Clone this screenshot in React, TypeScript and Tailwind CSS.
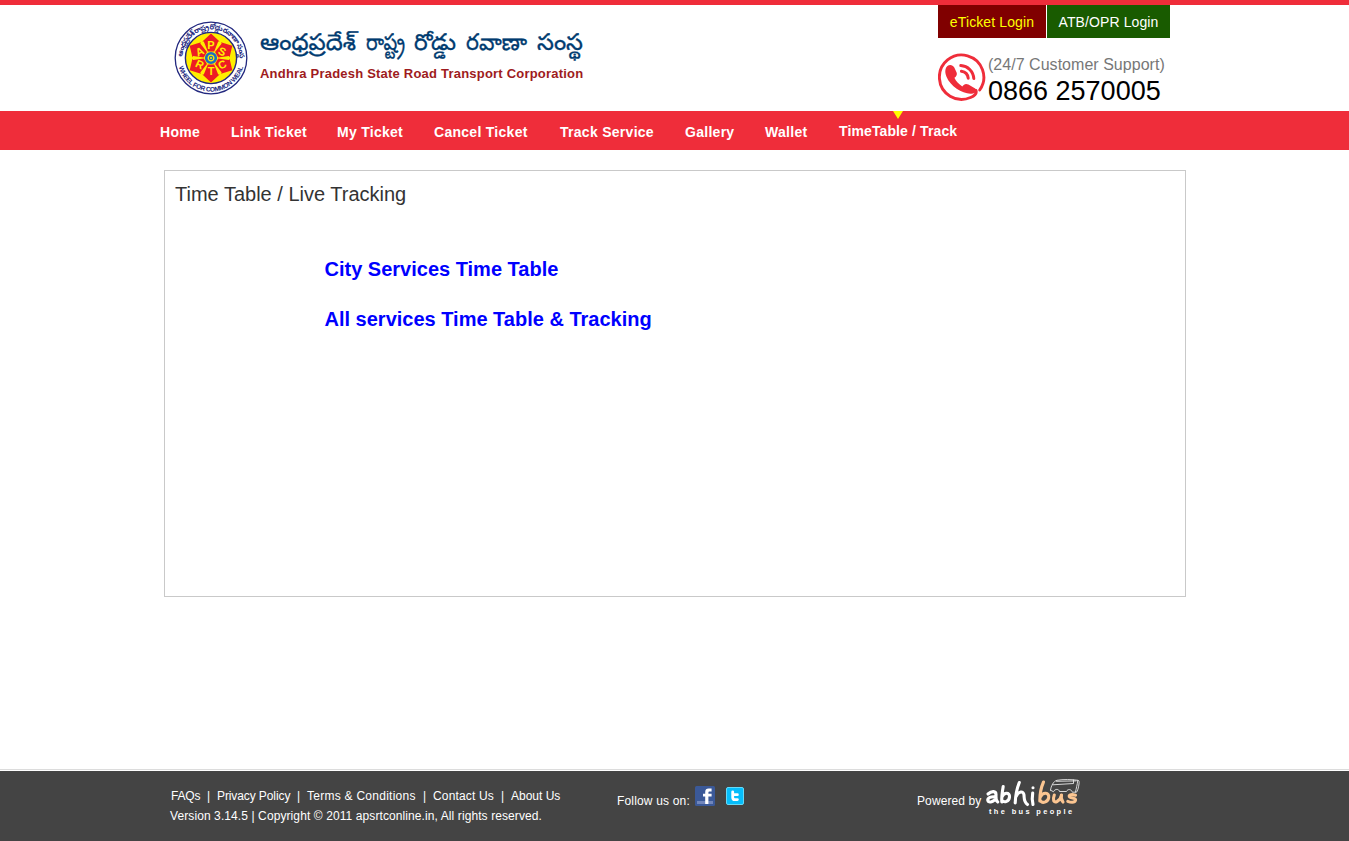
const navItems = [
  { label: "Home", width: "w-[71px]" },
  { label: "Link Ticket", width: "w-[106px]" },
  { label: "My Ticket", width: "w-[97px]" },
  { label: "Cancel Ticket", width: "w-[126px]" },
  { label: "Track Service", width: "w-[125px]" },
  { label: "Gallery", width: "w-[80px]" },
  { label: "Wallet", width: "w-[74px]" },
];

const footerLinks = [
  { label: "FAQs", style: "w-[46px] tracking-[-0.2px]" },
  { label: "Privacy Policy", style: "w-[90px] tracking-[-0.1px]" },
  { label: "Terms & Conditions", style: "w-[126px] tracking-[0.26px]" },
  { label: "Contact Us", style: "w-[78px] tracking-[0.15px]" },
  { label: "About Us", style: "" },
];

const sectors = [
  { letter: "P", angle: 0, tilt: 0 },
  { letter: "S", angle: 60, tilt: 25 },
  { letter: "C", angle: 120, tilt: -25 },
  { letter: "T", angle: 180, tilt: 0 },
  { letter: "R", angle: 240, tilt: 25 },
  { letter: "A", angle: 300, tilt: -25 },
];

const teluguWords = [
  { word: "ఆంధ్రప్రదేశ్", x: 0, width: 96 },
  { word: "రాష్ట్ర", x: 106, width: 39 },
  { word: "రోడ్డు", x: 154, width: 42 },
  { word: "రవాణా", x: 206, width: 61 },
  { word: "సంస్థ", x: 277, width: 46 },
];

function Emblem() {
  return (
    <svg className="h-[74px] w-[74px] shrink-0" viewBox="-37 -37 74 74">
      <circle r="35.8" fill="#fff" stroke="#22287f" strokeWidth="1.3" />
      <circle r="25.6" fill="#ffee00" stroke="#22287f" strokeWidth="1.4" />
      <defs>
        <path id="arc-top" d="M-27.6 7A28.5 28.5 0 1 1 27.6 7" />
        <path id="arc-bottom" d="M-33.1 3A33.2 33.2 0 0 0 33.1 3" />
      </defs>
      {sectors.map(({ letter, angle, tilt }) => (
        <g key={letter} transform={`rotate(${angle})`}>
          <path d="M-3.2 -6.5L-7.2 -16.5L-8.6 -16.5L0 -24.6L8.6 -16.5L7.2 -16.5L3.2 -6.5Z" fill="#ed1c24" />
          <g transform={`translate(0 -13) rotate(${tilt - angle})`}>
            <text y="3.9" textAnchor="middle" fontSize="11" fontWeight="700" fill="#ffee00" fontFamily="Liberation Sans, sans-serif">
              {letter}
            </text>
          </g>
        </g>
      ))}
      <circle r="4.8" fill="#ffee00" stroke="#1c6fc0" strokeWidth="2.6" />
      <circle r="2.2" fill="#1c6fc0" />
      <circle r="1" fill="#ffee00" />
      <text fontSize="7.2" fontWeight="700" fill="#22287f" fontFamily="Noto Sans Telugu, Noto Sans, sans-serif">
        <textPath href="#arc-top" startOffset="7" textLength="89">ఆంధ్రప్రదేశ్ రాష్ట్ర రోడ్డు రవాణా సంస్థ</textPath>
      </text>
      <text fontSize="6.6" fontWeight="700" fill="#22287f" fontFamily="Liberation Sans, sans-serif">
        <textPath href="#arc-bottom" startOffset="6" textLength="87">WHEEL FOR COMMON WEAL</textPath>
      </text>
    </svg>
  );
}

function PhoneIcon() {
  return (
    <svg className="h-[48px] w-[48px] shrink-0" viewBox="0 0 48 48" fill="none" stroke="#ef2d3a" strokeLinecap="round">
      <path d="M41.7 37A22.2 22.2 0 1 0 32.5 44.5C36 43 39 40.5 38 37.5" strokeWidth="2.9" />
      <path d="M7.6 16C8.8 11 14.4 10.6 16.3 14.6L18.6 19.5C19.5 22.2 17.8 23.8 16.4 24.8C17.8 28 20.8 31.2 24.3 33.4C26 31 27.9 30.2 30.4 31.6L37.2 35.4C40.2 37.8 38 40.2 33.5 40.7C25 41.4 12.4 33.6 8.5 23.8C7.4 21 6.9 18.6 7.6 16Z" fill="#ef2d3a" stroke="none" />
      <path d="M23.4 18.3C27 18.8 29.8 21.5 30.2 25.2M22.8 12.5C29.8 13 35.3 18.2 35.8 25.5" strokeWidth="3" />
    </svg>
  );
}

function FacebookIcon() {
  return (
    <svg className="h-5 w-5" viewBox="0 0 20 20">
      <rect width="20" height="20" rx="1.5" fill="#3b5998" />
      <rect x="2" y="15" width="16" height="3" fill="#7186bb" />
      <path d="M10.2 18V10.5H8V7.7H10.2V6C10.2 3.7 11.5 2.6 13.7 2.6H16.6V5.4H14.7C13.7 5.4 13.4 5.8 13.4 6.6V7.7H16.6V10.5H13.4V18Z" fill="#fff" />
    </svg>
  );
}

function TwitterIcon() {
  return (
    <svg className="h-[18px] w-[18px]" viewBox="0 0 18 18">
      <rect x=".5" y=".5" width="17" height="17" rx="1.5" fill="#06bdfb" stroke="#65daf8" />
      <path d="M6.7 4.8V10.4Q6.7 12.6 8.9 12.6H11.4M6.8 7.7H11.4" fill="none" stroke="#fff" strokeWidth="2.8" strokeLinecap="round" />
    </svg>
  );
}

function AbhibusLogo() {
  return (
    <svg className="h-[38px] w-[96px]" viewBox="0 0 96 38" fill="none" strokeLinecap="round" strokeLinejoin="round">
      <g stroke="#fff" strokeWidth="3.1">
        <path d="M3 15C7 11.5 11 12 11 15.5C11 20 10.5 21.5 12.8 23M10.8 18C6 17 2.4 19 2.8 21.5C3.4 24.5 9.5 22.5 10.7 19" />
        <path d="M18.2 7.5C17.2 13 16.5 18 16.8 23M17 18C19 13 25 13 24.5 18C24 22.5 19.5 24 17 21.5" />
        <path d="M34.3 3.5C31.7 10 30.5 16 30.2 24M31 17.5C33.5 12 38.5 11.5 39 16C39.3 20 38.8 23 42.5 25.5" />
        <path d="M47.7 14C47 18 47 21.5 48 25.5M48 8.7V8.8" />
      </g>
      <g stroke="#fbc591" strokeWidth="3.1">
        <path d="M58.5 3C55.8 9 54.8 15 54.8 22M55.3 18C58 12.5 64.4 13.5 63.7 18.5C63 23.5 57 25 54.8 21" />
        <path d="M69.3 16C67.5 21 68.5 24 72 22.5C74.5 21.3 76 18.5 76.5 16C75.8 19 76.2 21 78 23" />
        <path d="M90.5 16.2C86 14.7 82.5 16.2 85 18.2C87 19.4 91 19 90.5 21.2C89.7 24.3 85 23.3 82.8 22.3" />
      </g>
      <g stroke="#e8e8e8" strokeWidth=".9">
        <path d="M65.5 11.2C66 7 68.5 2 72 1.3C78 .2 87 .4 93 1.3C94.2 1.5 94.3 3 94 5C93.5 9 92.5 12 91.5 13.2H88M65.5 11.2L68.5 12.7C70 9.5 74 9.8 74.5 12.5H81.5C82.5 9.8 86.5 9.8 87.3 13M67.8 5.8L88.5 4.5V1M92.8 1.5C92.3 6 91 10 90.5 13M71.5 2.3L91 1.9" />
      </g>
      <text x="4" y="35" textLength="83" fontSize="7.4" fontWeight="700" fill="#fff" fontFamily="Liberation Sans, sans-serif">the bus people</text>
    </svg>
  );
}

export default function App() {
  return (
    <div className="flex h-[841px] w-full flex-col overflow-hidden bg-white font-['Liberation_Sans',Arial,sans-serif]">
      <header className="h-[111px] shrink-0 border-t-[5px] border-[#ef2d3a]">
        <div className="flex justify-between pr-[179px] pl-[174px]">
          <div className="flex pt-4">
            <Emblem />
            <div className="pl-3">
              <svg className="h-[45px] w-[324px] overflow-visible" viewBox="0 0 324 45">
                {teluguWords.map(({ word, x, width }) => (
                  <text key={word} x={x} y="28.5" textLength={width} lengthAdjust="spacingAndGlyphs" fontSize="22.5" fill="#003b70" stroke="#003b70" strokeWidth=".35" fontFamily="Noto Sans Telugu, Noto Sans, sans-serif">
                    {word}
                  </text>
                ))}
              </svg>
              <p className="text-[13px] leading-[15px] font-bold tracking-[0.21px] whitespace-nowrap text-[#9e1b20]">Andhra Pradesh State Road Transport Corporation</p>
            </div>
          </div>
          <div className="w-[232px]">
            <div className="flex h-[33px] gap-px text-[14px] leading-[34px] whitespace-nowrap">
              <a className="w-[108px] bg-[#800000] text-center tracking-[0.12px] text-[#ffff00]">eTicket Login</a>
              <a className="w-[123px] bg-[#195b00] text-center tracking-[0.1px] text-white">ATB/OPR Login</a>
            </div>
            <div className="flex gap-[2px] pt-[15px] whitespace-nowrap">
              <PhoneIcon />
              <div className="pt-[3px]">
                <p className="text-[16px] leading-[18px] tracking-[0.03px] text-[#777]">(24/7 Customer Support)</p>
                <p className="text-[27px] leading-[34px] text-black">0866 2570005</p>
              </div>
            </div>
          </div>
        </div>
      </header>
      <nav className="flex h-[39px] shrink-0 bg-[#ef2d3a] pl-[160px] text-[14px] leading-[42px] font-bold whitespace-nowrap text-white">
        {navItems.map(({ label, width }) => (
          <a key={label} className={`${width} shrink-0 tracking-[0.28px]`}>{label}</a>
        ))}
        <a className="relative text-[14px] leading-[40px] tracking-[0.12px]">
          TimeTable / Track
          <svg className="absolute top-0 left-[54px] h-2 w-[10px]" viewBox="0 0 10 8"><path d="M0 0H10L5 8Z" fill="#ffff00" /></svg>
        </a>
      </nav>
      <main className="mt-5 ml-[164px] h-[427px] w-[1022px] shrink-0 border border-[#c9c9c9] pt-[11px] pl-[10px]">
        <h1 className="text-[20px] leading-6 text-[#333]">Time Table / Live Tracking</h1>
        <div className="flex flex-col gap-[26px] pt-[51px] pl-[149.5px] text-[20px] leading-6 font-bold text-[#0000ff]">
          <a>City Services Time Table</a>
          <a>All services Time Table &amp; Tracking</a>
        </div>
      </main>
      <footer className="mt-auto h-[72px] shrink-0 border-t border-[#dcdcdc] pt-px">
        <div className="flex h-[70px] bg-[#444] pl-[170px] text-[12px] whitespace-nowrap text-white">
          <div className="w-[447px] pt-[15px] leading-5">
            <div className="flex pl-px">
              {footerLinks.map(({ label, style }, i) => (
                <span key={label} className={`flex justify-between ${style}`}>
                  <a>{label}</a>
                  {i < footerLinks.length - 1 && <i className="pr-[7px] tracking-normal not-italic">|</i>}
                </span>
              ))}
            </div>
            <p className="tracking-[0.095px]">Version 3.14.5 | Copyright © 2011 apsrtconline.in, All rights reserved.</p>
          </div>
          <div className="flex w-[300px] pt-[15px]">
            <span className="w-[78px] pt-[5px] leading-5 tracking-[0.17px]">Follow us on:</span>
            <FacebookIcon />
            <span className="ml-[11px] pt-px"><TwitterIcon /></span>
          </div>
          <div className="flex pt-2">
            <span className="w-[68px] pt-[12px] leading-5 tracking-[0.1px]">Powered by</span>
            <AbhibusLogo />
          </div>
        </div>
      </footer>
    </div>
  );
}
